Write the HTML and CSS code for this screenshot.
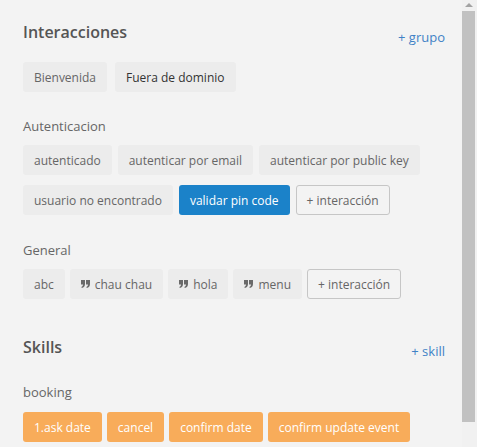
FILE: index.html
```html
<!DOCTYPE html>
<html>
<head>
<meta charset="utf-8">
<link rel="stylesheet" href="styles.css">
</head>
<body>
<div class="page">
  <div class="main">
    <div class="head">
      <h2 class="title">Interacciones</h2>
      <a class="add">+ grupo</a>
    </div>
    <div class="chips first">
      <span class="chip">Bienvenida</span>
      <span class="chip dark">Fuera de dominio</span>
    </div>

    <div class="group">
      <div class="label">Autenticacion</div>
      <div class="chips">
        <span class="chip">autenticado</span>
        <span class="chip">autenticar por email</span>
        <span class="chip">autenticar por public key</span>
      </div>
      <div class="chips">
        <span class="chip">usuario no encontrado</span>
        <span class="chip active">validar pin code</span>
        <span class="chip outline">+ interacción</span>
      </div>
    </div>

    <div class="group general">
      <div class="label">General</div>
      <div class="chips">
        <span class="chip">abc</span>
        <span class="chip"><svg class="q" viewBox="0 0 9 8"><path d="M0 0h4v4c0 2.2-1.2 3.5-3.2 4L.4 6.9c1-.4 1.6-1.1 1.6-2.4H0z M5 0h4v4c0 2.2-1.2 3.5-3.2 4L5.4 6.9c1-.4 1.6-1.1 1.6-2.4H5z"/></svg>chau chau</span>
        <span class="chip"><svg class="q" viewBox="0 0 9 8"><path d="M0 0h4v4c0 2.2-1.2 3.5-3.2 4L.4 6.9c1-.4 1.6-1.1 1.6-2.4H0z M5 0h4v4c0 2.2-1.2 3.5-3.2 4L5.4 6.9c1-.4 1.6-1.1 1.6-2.4H5z"/></svg>hola</span>
        <span class="chip"><svg class="q" viewBox="0 0 9 8"><path d="M0 0h4v4c0 2.2-1.2 3.5-3.2 4L.4 6.9c1-.4 1.6-1.1 1.6-2.4H0z M5 0h4v4c0 2.2-1.2 3.5-3.2 4L5.4 6.9c1-.4 1.6-1.1 1.6-2.4H5z"/></svg>menu</span>
        <span class="chip outline">+ interacción</span>
      </div>
    </div>

    <div class="head skills">
      <h2 class="title">Skills</h2>
      <a class="add">+ skill</a>
    </div>
    <div class="label booking">booking</div>
    <div class="chips last">
      <span class="chip orange">1.ask date</span>
      <span class="chip orange">cancel</span>
      <span class="chip orange">confirm date</span>
      <span class="chip orange">confirm update event</span>
    </div>
  </div>
  <div class="scrollbar">
    <div class="arrow"></div>
    <div class="thumb"></div>
  </div>
</div>
</body>
</html>
```

FILE: styles.css
```css
html, body {
  margin: 0;
  padding: 0;
  height: 100%;
  overflow: hidden;
}
body {
  background: #f3f3f3;
  font-family: "Open Sans", "Noto Sans", sans-serif;
  color: #666;
}
.page {
  display: flex;
  height: 447px;
}
.main {
  flex: 1;
  padding: 21px 17px 0 23px;
}
.head {
  display: flex;
  justify-content: space-between;
  align-items: flex-start;
}
.title {
  margin: 0;
  font-size: 16px;
  line-height: 22px;
  font-weight: 600;
  color: #555;
}
.add {
  font-size: 13px;
  line-height: 18px;
  color: #3f82c6;
  padding-top: 7px;
  margin-bottom: -4px;
}
.chips {
  display: flex;
  flex-wrap: wrap;
  gap: 6px;
  margin-top: 10px;
}
.chips.first {
  margin-top: 19px;
  gap: 8px;
}
.general .chips,
.chips.last {
  gap: 5px;
}
.chips.last {
  margin-top: 11px;
}
.chip {
  display: inline-flex;
  align-items: center;
  height: 30px;
  box-sizing: border-box;
  padding: 0 11px;
  font-size: 12px;
  background: #ececec;
  border-radius: 3px;
  color: #666;
  white-space: nowrap;
}
.chip.dark {
  color: #333;
}
.chip.active {
  background: #1b82c9;
  color: #fff;
}
.chip.outline {
  background: transparent;
  border: 1px solid #c6c6c6;
  padding: 0 10px;
}
.chip.orange {
  background: #f8ac5a;
  color: #fff;
}
.q {
  width: 9px;
  height: 8px;
  fill: #6a6a6a;
  margin-right: 5px;
}
.group {
  margin-top: 25px;
}
.group.general {
  margin-top: 26px;
}
.label {
  font-size: 13px;
  line-height: 18px;
  color: #666;
}
.skills {
  margin-top: 37px;
}
.skills .add {
  padding-top: 6px;
}
.booking {
  margin-top: 25px;
}
.scrollbar {
  width: 15px;
  background: #f1f1f1;
  display: flex;
  flex-direction: column;
  align-items: flex-start;
}
.arrow {
  width: 0;
  height: 0;
  margin: 3px 0 0 3px;
  border-left: 4px solid transparent;
  border-right: 4px solid transparent;
  border-bottom: 4px solid #a3a3a3;
}
.thumb {
  width: 13px;
  height: 411px;
  margin-top: 4px;
  background: #c1c1c1;
}
```
